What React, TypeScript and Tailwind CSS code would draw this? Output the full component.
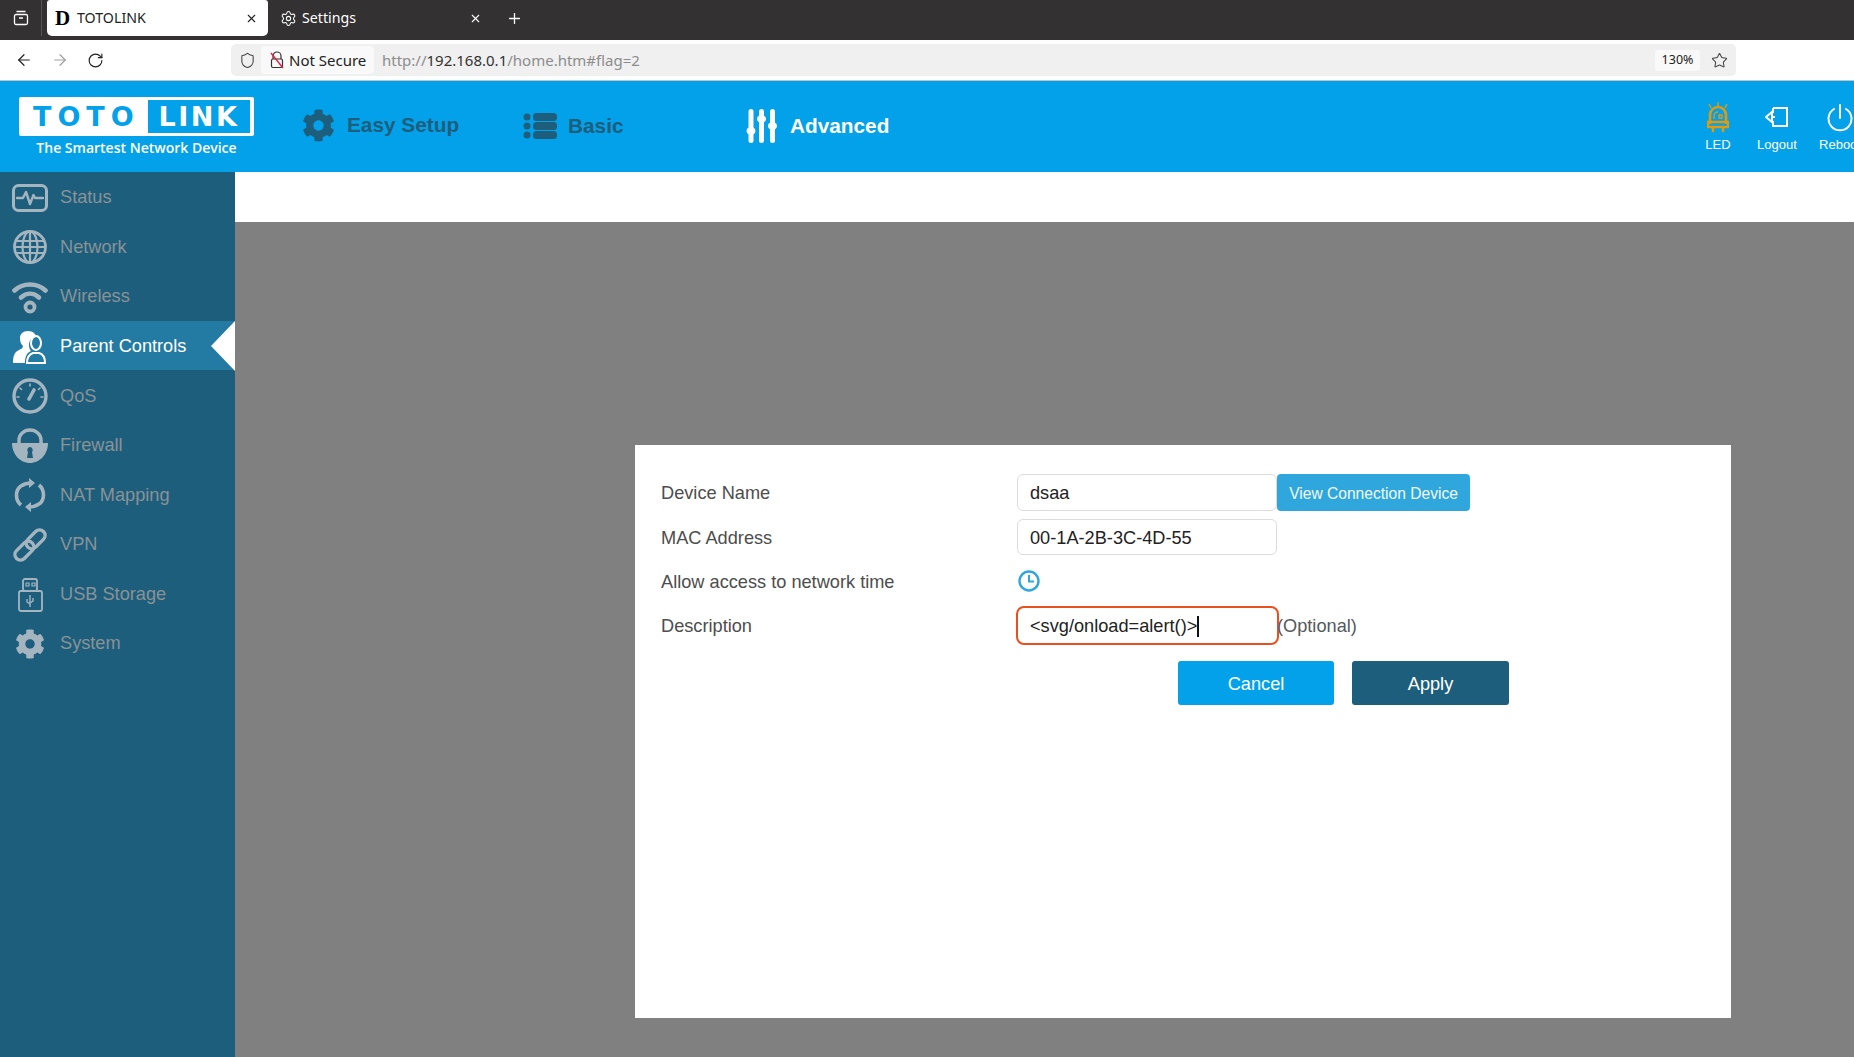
import React from 'react';
import { FaCog } from 'react-icons/fa';
import { Settings, X, Plus, ArrowLeft, ArrowRight, RotateCw, Star, Shield } from 'lucide-react';

const StatusIcon = () => (
  <svg viewBox="0 0 36 28" className="w-9 h-7" fill="none" stroke="currentColor" strokeWidth="3" strokeLinejoin="round" strokeLinecap="round">
    <rect x="1.500" y="1.500" width="33" height="25" rx="5" />
    <path d="M5 14h6l3-6 4 12 3.500-9 1.500 3h8" strokeWidth="2.400" />
  </svg>
);

const GlobeIcon = () => (
  <svg viewBox="0 0 36 36" className="w-9 h-9" fill="none" stroke="currentColor" strokeWidth="2.200">
    <circle cx="18" cy="18" r="15.500" strokeWidth="2.800" />
    <ellipse cx="18" cy="18" rx="7.500" ry="15.500" />
    <path d="M18 2.500v31M3 12h30M3 24h30M2.500 18h31" />
  </svg>
);

const WifiIcon = () => (
  <svg viewBox="0 0 36 36" className="w-9 h-9" fill="none" stroke="currentColor" strokeLinecap="round">
    <path d="M2.500 11.500C11 3.500 25 3.500 33.500 11.500" strokeWidth="4.600" />
    <path d="M9 18.500c5.500-5 12.500-5 18 0" strokeWidth="4.600" />
    <circle cx="18" cy="28" r="4.500" strokeWidth="3.800" />
  </svg>
);

const ParentIcon = () => (
  <svg viewBox="0 0 36 36" className="w-9 h-9 text-white">
    <path d="M16 2c5 0 8 3 8 6-4 0-7 3-7 8 0 3 1 5 2 6-5 2-6 7-6 12H1c0-6 1-11 6-13 2-1 4-2 4-4-2-2-3-4-3-8 0-4 3-7 8-7z" fill="currentColor" />
    <g fill="none" stroke="currentColor" strokeWidth="2">
      <ellipse cx="24" cy="14" rx="5" ry="7" />
      <path d="M15 34c0-6 3-9 6-10h6c4 1 6 4 6 10z" />
    </g>
  </svg>
);

const GaugeIcon = () => (
  <svg viewBox="0 0 36 36" className="w-9 h-9" fill="none" stroke="currentColor" strokeWidth="3.400" strokeLinecap="round">
    <circle cx="18" cy="18" r="16" />
    <path d="M18 6v2M8 10l1.500 1.500M28 10l-1.500 1.500M5 19h2M29 19h2" strokeWidth="1.600" />
    <path d="M17 21l5-9" strokeWidth="3.600" />
  </svg>
);

const LockIcon = () => (
  <svg viewBox="0 0 36 36" className="w-9 h-9">
    <path d="M7 16v-4a11 10 0 0 1 22 0v4" fill="none" stroke="currentColor" strokeWidth="3.400" />
    <path fillRule="evenodd" fill="currentColor" d="M0 15h36c0 11-8 20-18 20S0 26 0 15zM18 19a3 3 0 0 0-2 5l-1 6h6l-1-6a3 3 0 0 0-2-5z" />
  </svg>
);

const NatIcon = () => (
  <svg viewBox="0 0 36 36" className="w-9 h-9" fill="none" stroke="currentColor" strokeWidth="3.600">
    <path d="M9 28C3 23 3 13 9 9c3-2 6-3 10-3" />
    <path d="M27 8c6 5 6 15 0 19-3 2-6 3-10 3" />
    <path d="M17 1l6 5-6 5zM19 25l-6 5 6 5z" fill="currentColor" stroke="none" />
  </svg>
);

const LinkIcon = () => (
  <svg viewBox="0 0 36 36" className="w-9 h-9" fill="none" stroke="currentColor" strokeWidth="3.400">
    <g transform="rotate(-45 18 18)">
      <rect x="-1" y="12.500" width="22" height="11" rx="5.500" />
      <rect x="15" y="12.500" width="22" height="11" rx="5.500" />
    </g>
  </svg>
);

const UsbIcon = () => (
  <svg viewBox="0 0 36 36" className="w-9 h-9" fill="none" stroke="currentColor" strokeWidth="1.800" strokeLinejoin="round">
    <rect x="11" y="2" width="14" height="12" rx="2" />
    <rect x="7" y="14" width="23" height="20" rx="2" />
    <path d="M14 6h3v3h-3zM20 6h3v3h-3z" strokeWidth="1.200" />
    <path d="M18 18v12M15 22v3l3 2M21 21v3l-3 2" strokeWidth="1.400" />
  </svg>
);

const MENU = [
  { label: 'Status', icon: <StatusIcon /> },
  { label: 'Network', icon: <GlobeIcon /> },
  { label: 'Wireless', icon: <WifiIcon /> },
  { label: 'Parent Controls', icon: <ParentIcon />, active: true },
  { label: 'QoS', icon: <GaugeIcon /> },
  { label: 'Firewall', icon: <LockIcon /> },
  { label: 'NAT Mapping', icon: <NatIcon /> },
  { label: 'VPN', icon: <LinkIcon /> },
  { label: 'USB Storage', icon: <UsbIcon /> },
  { label: 'System', icon: <FaCog className="w-[30px] h-[30px]" /> },
];

const Sidebar = () => (
  <aside className="w-[235px] shrink-0 bg-[#1c5e7c] text-[18.2px]">
    {MENU.map((item) => (
      <div
        key={item.label}
        className={`relative flex items-center h-[49.6px] pt-[2px] ${item.active ? 'bg-[#237ba4] text-white' : 'text-[#8a9296]'}`}
      >
        <span className={`w-[60px] flex items-center justify-center shrink-0 ${item.active ? '' : 'text-[#a5b5c0]'}`}>
          {item.icon}
        </span>
        {item.label}
        {item.active && (
          <span className="absolute right-0 top-0 w-0 h-0 border-y-[25px] border-y-transparent border-r-[24px] border-r-white" />
        )}
      </div>
    ))}
  </aside>
);

const BrowserChrome = () => (
  <>
    <div className="h-10 bg-[#333131] flex text-[14.2px] text-white font-['Noto_Sans',sans-serif]">
      <div className="w-[42px] h-9 flex items-center justify-center border-r border-[#555]">
        <svg viewBox="0 0 16 16" className="w-4 h-4" fill="none" stroke="#fff" strokeWidth="1.300">
          <rect x="1.500" y="4.500" width="13" height="10" rx="1.500" />
          <path d="M3.500 1.500h9M6 8h4" />
        </svg>
      </div>
      <div className="ml-[5px] w-[221px] h-9 bg-white text-[#222] rounded-b-[5px] rounded-t-[3px] flex items-center pl-2">
        <span className="w-[22px] font-['Liberation_Serif',serif] font-bold text-[21px] text-black leading-none">D</span>
        <span>TOTOLINK</span>
        <X className="ml-auto mr-[10px] w-[13px] h-[13px]" strokeWidth={2} />
      </div>
      <div className="w-[221px] h-9 flex items-center pl-[12px]">
        <Settings className="w-[17px] h-[17px] mr-[5px]" strokeWidth={1.500} />
        <span>Settings</span>
        <X className="ml-auto mr-[7px] w-[13px] h-[13px]" strokeWidth={2} />
      </div>
      <div className="h-9 flex items-center ml-[17px]">
        <Plus className="w-[17px] h-[17px]" strokeWidth={1.800} />
      </div>
    </div>
    <div className="h-[41px] bg-white border-b border-[#c4c4c4] flex items-center text-[#222] font-['Noto_Sans',sans-serif]">
      <div className="w-[231px] pl-[15px] flex items-center gap-[18px] shrink-0">
        <ArrowLeft className="w-[18px] h-[18px]" strokeWidth={1.600} />
        <ArrowRight className="w-[18px] h-[18px] text-[#a0a0a0]" strokeWidth={1.600} />
        <RotateCw className="w-[17px] h-[17px]" strokeWidth={1.600} />
      </div>
      <div className="w-[1505px] h-8 bg-[#f0f0f0] rounded-[5px] flex items-center">
        <Shield className="ml-[8px] w-[17px] h-[19px] text-[#444]" strokeWidth={1.500} />
        <div className="ml-[5px] w-[113px] h-7 bg-[#f9f9f9] rounded-[4px] flex items-center pl-[9px] text-[15px]">
          <svg viewBox="0 0 14 18" className="w-[14px] h-[18px] mr-[5px]" fill="none" strokeWidth="1.200">
            <path d="M3 8V5a4 4 0 0 1 8 0v3" stroke="#333" />
            <rect x="1.500" y="8" width="11" height="8.500" rx="1.500" stroke="#333" />
            <path d="M1 2l12 15" stroke="#e2224a" strokeWidth="1.400" />
          </svg>
          Not Secure
        </div>
        <div className="ml-[8px] text-[15px] text-[#8c8c8c]">
          http://<span className="text-[#333]">192.168.0.1</span>/home.htm#flag=2
        </div>
        <div className="ml-auto w-[45px] h-[21px] bg-[#f9f9f9] rounded-[3px] flex items-center justify-center text-[12.5px]">130%</div>
        <Star className="ml-[11px] mr-[8px] w-[17px] h-[17px] text-[#444]" strokeWidth={1.500} />
      </div>
    </div>
  </>
);

const Logo = () => (
  <div className="ml-[19px] w-[235px] shrink-0 flex flex-col items-center pt-[2px]">
    <div className="w-[235px] h-[39px] bg-white rounded-[2px] flex items-center font-['DejaVu_Sans',sans-serif] font-bold text-[27px] leading-none">
      <span className="ml-[14px] w-[115px] tracking-[6px] text-[#03a1e9]">TOTO</span>
      <span className="w-[102px] h-[33px] bg-[#03a1e9] text-white tracking-[2.500px] flex items-center justify-center">LINK</span>
    </div>
    <div className="mt-[2px] text-[14px] font-semibold text-white font-['Open_Sans',sans-serif] leading-[20px]">The Smartest Network Device</div>
  </div>
);

const Header = () => (
  <header className="h-[91px] bg-[#03a1e9] flex items-center shrink-0 font-['Liberation_Sans',sans-serif]">
    <Logo />
    <div className="flex-1 flex items-center text-[20.8px] font-bold text-[#1c5e7c] pb-[2px]">
      <div className="ml-[48px] w-[221px] flex items-center gap-[12px]">
        <FaCog className="w-[33px] h-[33px]" />
        <span className="pb-[2px]">Easy Setup</span>
      </div>
      <div className="w-[222px] flex items-center gap-[11px]">
        <svg viewBox="0 0 34 26" className="w-[34px] h-[26px]" fill="currentColor">
          <circle cx="4" cy="4" r="3.500" />
          <circle cx="4" cy="13" r="3.500" />
          <circle cx="4" cy="22" r="3.500" />
          <rect x="10" y="0" width="24" height="8" rx="3.500" />
          <rect x="10" y="9" width="24" height="8" rx="3.500" />
          <rect x="10" y="18" width="24" height="8" rx="3.500" />
        </svg>
        Basic
      </div>
      <div className="flex items-center gap-[13px] text-white">
        <svg viewBox="0 0 32 34" className="w-[32px] h-[34px]" fill="currentColor">
          <rect x="3.500" y="0" width="5" height="34" rx="2.500" />
          <rect x="14" y="0" width="5" height="34" rx="2.500" />
          <rect x="25" y="0" width="5" height="34" rx="2.500" />
          <ellipse cx="6" cy="22" rx="4.500" ry="4" />
          <ellipse cx="16.500" cy="10" rx="4.500" ry="4" />
          <ellipse cx="27.500" cy="17" rx="4.500" ry="4" />
        </svg>
        Advanced
      </div>
    </div>
    <div className="w-[166px] shrink-0 flex text-[13px] text-white pt-[4px]">
      <div className="w-[60px] shrink-0 flex flex-col items-center">
        <svg viewBox="0 0 22 30" className="w-[22px] h-[30px]" fill="none" stroke="#e09a0c">
          <path d="M11 0v4M2 2l2 4M20 2l-2 4" strokeWidth="1.500" />
          <path d="M3 22v-9a8 8 0 0 1 16 0v9" strokeWidth="2.600" />
          <path d="M1 20h20v5H1zM6 25v5M16 25v5" strokeWidth="2.400" />
          <path d="M7 17v-3a4 4 0 0 1 4-4M12 13h3v3h-3z" strokeWidth="1.400" />
        </svg>
        <span className="mt-[3px]">LED</span>
      </div>
      <div className="w-[58px] shrink-0 flex flex-col items-center">
        <svg viewBox="0 0 24 30" className="w-[24px] h-[30px]" fill="none" stroke="currentColor" strokeWidth="2">
          <path d="M8 6h14v18H8v-5M8 11V6" />
          <path d="M1 15l6-5v10zM10 15h-3" />
        </svg>
        <span className="mt-[3px]">Logout</span>
      </div>
      <div className="w-[68px] shrink-0 flex flex-col items-center">
        <svg viewBox="0 0 26 30" className="w-[26px] h-[30px]" fill="none" stroke="currentColor" strokeWidth="2" strokeLinecap="round">
          <path d="M13 3v13" />
          <path d="M7 7a11.500 11.500 0 1 0 12 0" />
        </svg>
        <span className="mt-[3px]">Reboot</span>
      </div>
    </div>
  </header>
);

const LABEL = 'w-[356px] shrink-0 text-[#4d4d4d] pt-[2px]';
const INPUT = 'w-[260px] bg-white border border-[#dcdcdc] rounded-[6px] pl-[12px] pt-[3px] flex items-center text-[#222]';

const Panel = () => (
  <div className="w-[1096px] h-[573px] bg-white pt-[29px] pl-[26px] text-[18.2px]">
    <div className="flex items-center h-[37px]">
      <div className={LABEL}>Device Name</div>
      <div className={`${INPUT} h-[37px]`}>dsaa</div>
      <button className="h-[37px] w-[193px] bg-[#2fa7dc] rounded-[4px] text-[15.6px] text-[#f2f9fc] pt-[2px]">View Connection Device</button>
    </div>
    <div className="flex items-center h-[36px] mt-[8px]">
      <div className="w-[356px] shrink-0 text-[#4d4d4d] pt-[3px]">MAC Address</div>
      <div className={`${INPUT} h-[36px]`}>00-1A-2B-3C-4D-55</div>
    </div>
    <div className="flex items-center h-[22px] mt-[15px]">
      <div className="w-[356px] shrink-0 text-[#4d4d4d] pt-[4px]">Allow access to network time</div>
      <svg viewBox="0 0 22 22" className="w-[22px] h-[22px] ml-[1px]" fill="none" stroke="#2fa7dc" strokeWidth="2.400">
        <circle cx="11" cy="11" r="9.500" />
        <path d="M11 5v6.500h5" strokeWidth="2" />
      </svg>
    </div>
    <div className="flex items-center h-[39px] mt-[14px]">
      <div className="w-[355px] shrink-0 text-[#4d4d4d] pt-[2px]">Description</div>
      <div className="w-[263px] h-[39px] bg-white border-2 border-[#e8501f] rounded-[8px] pl-[12px] pt-[2px] flex items-center text-[#222]">
        &lt;svg/onload=alert()&gt;<span className="w-[2px] h-[21px] bg-[#111]" />
      </div>
      <span className="text-[#55595c] -ml-[2px] pt-[2px]">(Optional)</span>
    </div>
    <div className="flex mt-[16px] ml-[517px] gap-[18px] text-white">
      <button className="w-[156px] h-[44px] bg-[#03a1e9] rounded-[3px] pt-[3px]">Cancel</button>
      <button className="w-[157px] h-[44px] bg-[#1c5e7c] rounded-[3px] pt-[3px]">Apply</button>
    </div>
  </div>
);

export default function App() {
  return (
    <div className="w-[1854px] h-[1057px] overflow-hidden flex flex-col bg-white font-['Liberation_Sans',sans-serif]">
      <BrowserChrome />
      <Header />
      <div className="flex-1 flex min-h-0">
        <Sidebar />
        <main className="flex-1 flex flex-col min-w-0">
          <div className="h-[50px] bg-white shrink-0" />
          <div className="flex-1 bg-[#808080] pt-[223px] pl-[400px]">
            <Panel />
          </div>
        </main>
      </div>
    </div>
  );
}
